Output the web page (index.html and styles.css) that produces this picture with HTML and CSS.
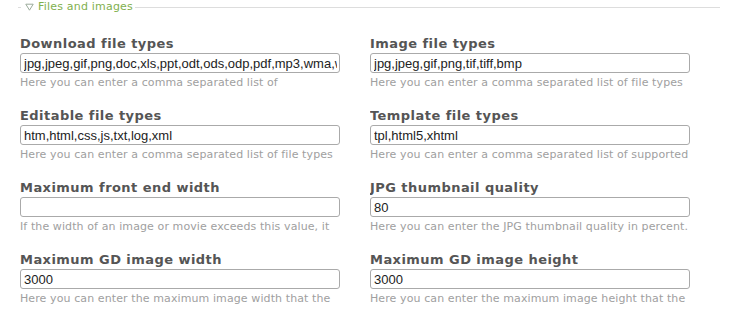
FILE: index.html
```html
<!DOCTYPE html>
<html lang="en">
<head>
<meta charset="utf-8">
<title>Files and images</title>
<link rel="stylesheet" href="styles.css">
</head>
<body>
<div class="panel">
  <div class="legend">
    <span class="legend-lead"></span>
    <span class="legend-title">
      <svg class="toggle" width="9" height="8" viewBox="0 0 9 8"><path d="M0.8 1.2 H8.2 L4.5 7.2 Z" fill="none" stroke="#9aaa9a" stroke-width="1"/></svg>
      Files and images
    </span>
    <span class="legend-line"></span>
  </div>
  <div class="grid">
    <div class="widget">
      <label class="label">Download file types</label>
      <input class="field" type="text" value="jpg,jpeg,gif,png,doc,xls,ppt,odt,ods,odp,pdf,mp3,wma,wmv,ram,rm,mov,zip,rar,7z">
      <p class="help">Here you can enter a comma separated list of</p>
    </div>
    <div class="widget">
      <label class="label">Image file types</label>
      <input class="field" type="text" value="jpg,jpeg,gif,png,tif,tiff,bmp">
      <p class="help">Here you can enter a comma separated list of file types</p>
    </div>
    <div class="widget">
      <label class="label">Editable file types</label>
      <input class="field" type="text" value="htm,html,css,js,txt,log,xml">
      <p class="help">Here you can enter a comma separated list of file types</p>
    </div>
    <div class="widget">
      <label class="label">Template file types</label>
      <input class="field" type="text" value="tpl,html5,xhtml">
      <p class="help">Here you can enter a comma separated list of supported</p>
    </div>
    <div class="widget">
      <label class="label">Maximum front end width</label>
      <input class="field" type="text" value="">
      <p class="help">If the width of an image or movie exceeds this value, it</p>
    </div>
    <div class="widget">
      <label class="label">JPG thumbnail quality</label>
      <input class="field" type="text" value="80">
      <p class="help">Here you can enter the JPG thumbnail quality in percent.</p>
    </div>
    <div class="widget">
      <label class="label">Maximum GD image width</label>
      <input class="field" type="text" value="3000">
      <p class="help">Here you can enter the maximum image width that the</p>
    </div>
    <div class="widget">
      <label class="label">Maximum GD image height</label>
      <input class="field" type="text" value="3000">
      <p class="help">Here you can enter the maximum image height that the</p>
    </div>
  </div>
</div>
</body>
</html>
```

FILE: styles.css
```css
html, body {
  margin: 0;
  padding: 0;
  background: #fff;
}

body {
  font-family: "DejaVu Sans", Verdana, sans-serif;
  color: #444;
}

.panel {
  padding: 0 21px 0 18px;
}

.legend {
  display: flex;
  align-items: center;
  height: 14px;
}

.legend-lead {
  width: 3px;
  border-top: 1px solid #ddd;
}

.legend-line {
  flex: 1;
  border-top: 1px solid #ddd;
}

.legend-title {
  display: flex;
  align-items: center;
  gap: 4px;
  padding: 0 2px 0 4px;
  font-size: 11px;
  letter-spacing: 0.2px;
  line-height: 14px;
  color: #7fb04e;
}

.toggle {
  display: block;
}

.grid {
  display: grid;
  grid-template-columns: 320px 320px;
  column-gap: 30px;
  margin: 22px 0 0 2px;
}

.widget {
  height: 72px;
  overflow: hidden;
}

.label {
  display: block;
  font-size: 13px;
  letter-spacing: 0.45px;
  font-weight: bold;
  line-height: 16px;
  color: #555;
  margin-bottom: 1px;
  white-space: nowrap;
}

.field {
  display: block;
  box-sizing: border-box;
  width: 320px;
  height: 20px;
  margin: 0;
  padding: 0 2px 0 3px;
  border: 1px solid #aaa;
  border-radius: 3px;
  font-family: "Liberation Sans", Arial, sans-serif;
  font-size: 13px;
  color: #222;
  background: #fff;
  outline: none;
}

.help {
  margin: 3px 0 0;
  font-size: 11px;
  letter-spacing: 0.1px;
  line-height: 14px;
  color: #a0a0a0;
  white-space: nowrap;
}
```
